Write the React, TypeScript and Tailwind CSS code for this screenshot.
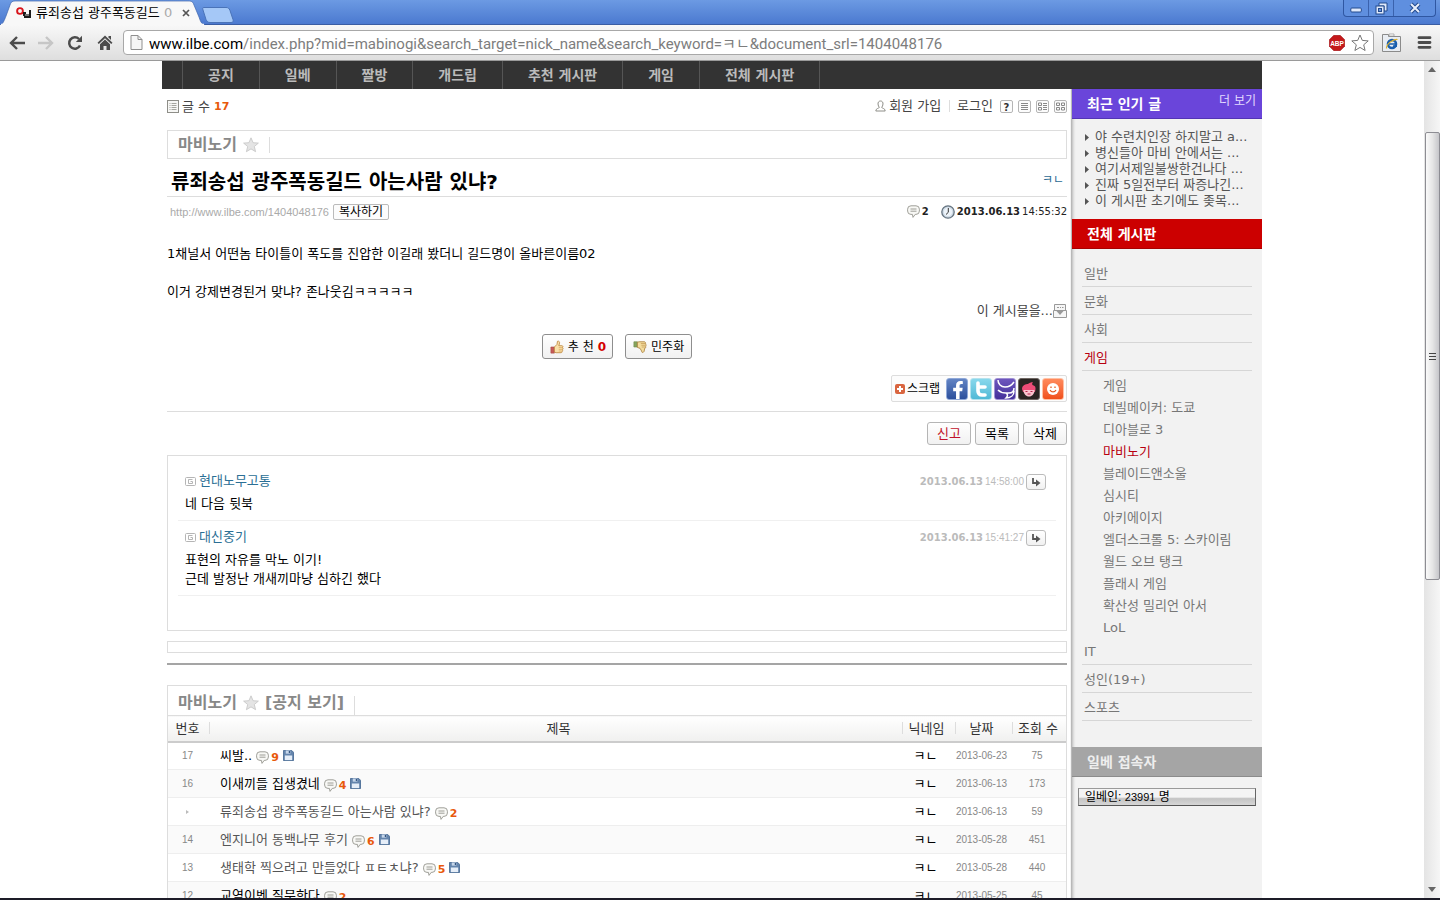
import React from "react";
import { FaFacebookF } from "react-icons/fa";

const SANS = "font-['DejaVu_Sans','Noto_Sans_CJK_KR',sans-serif]";
const NARROW = "font-['Liberation_Sans','Noto_Sans_CJK_KR',sans-serif]";

const menu = ["공지", "일베", "짤방", "개드립", "추천 게시판", "게임", "전체 게시판"];

const popular = [
  "야 수련치인장 하지말고 a...",
  "병신들아 마비 안에서는 ...",
  "여기서제일불쌍한건나다 ...",
  "진짜 5일전부터 짜증나긴...",
  "이 게시판 초기에도 좆목...",
];

const gameBoards = [
  "게임",
  "데빌메이커: 도쿄",
  "디아블로 3",
  "마비노기",
  "블레이드앤소울",
  "심시티",
  "아키에이지",
  "엘더스크롤 5: 스카이림",
  "월드 오브 탱크",
  "플래시 게임",
  "확산성 밀리언 아서",
  "LoL",
];

const rows = [
  { no: "17", title: "씨발..", count: 9, saved: true, date: "2013-06-23", views: 75, unread: true },
  { no: "16", title: "이새끼들 집생겼네", count: 4, saved: true, date: "2013-06-13", views: 173, unread: true },
  { no: "", title: "류죄송섭 광주폭동길드 아는사람 있냐?", count: 2, saved: false, date: "2013-06-13", views: 59, unread: false },
  { no: "14", title: "엔지니어 동백나무 후기", count: 6, saved: true, date: "2013-05-28", views: 451, unread: false },
  { no: "13", title: "생태학 찍으려고 만들었다 ㅍㅌㅊ냐?", count: 5, saved: true, date: "2013-05-28", views: 440, unread: false },
  { no: "12", title: "교역이벤 질문한다", count: 2, saved: false, date: "2013-05-25", views: 45, unread: true },
];

const comments = [
  { name: "현대노무고통", time: "14:58:00", lines: ["네 다음 뒷북"] },
  { name: "대신중기", time: "15:41:27", lines: ["표현의 자유를 막노 이기!", "근데 발정난 개새끼마냥 심하긴 했다"] },
];

function Bubble() {
  return (
    <svg viewBox="0 0 13 13" className="size-[13px] shrink-0" fill="none">
      <path d="M4 .8h5a3.4 3.4 0 0 1 3.4 3.4v1.8A3.4 3.4 0 0 1 9 9.400h-.8L6 12.400 5.400 9.400H4A3.400 3.400 0 0 1 .6 6V4.200A3.400 3.400 0 0 1 4 .8Z" fill="#f8f8f5" stroke="#96968f" strokeWidth=".9" />
      <path d="M3.500 4h6M3.500 6.200h6" stroke="#85857d" strokeWidth=".8" />
    </svg>
  );
}

function Floppy() {
  return (
    <svg viewBox="0 0 12 12" className="size-[11px] shrink-0">
      <path d="M.5.5h9l2 2v9H.5Z" fill="#6485ad" stroke="#4c6d96" />
      <path d="M3 .5h5v3.500H3Z" fill="#c6d6ea" />
      <path d="M6.300 1h1.400v2.400H6.300Z" fill="#34557f" />
      <path d="M2 6h8v5H2Z" fill="#e6eef8" />
    </svg>
  );
}

function Star() {
  return (
    <svg viewBox="0 0 16 16" className="size-4 shrink-0">
      <path d="M8 .8l2.100 4.900 5.300.4-4.100 3.400 1.300 5.200L8 11.900l-4.600 2.800 1.300-5.200L.6 6.100l5.300-.4Z" fill="#e4e4e4" stroke="#c4c4c4" strokeWidth=".8" />
    </svg>
  );
}

function TitleBar() {
  return (
    <div className="flex h-[25px] items-start justify-between bg-linear-to-b from-[#6c9ae3] to-[#4a78cf] shadow-[inset_0_-1px_0_#3a5da3]">
      <div className="flex">
        <div className="relative flex h-[25px] w-[205px] items-center gap-1 pl-4">
          <svg viewBox="0 0 205 25" preserveAspectRatio="none" className="absolute inset-0 size-full">
            <path d="M0 25c3-1 4-4 6-9l4-11c1-3 2-4 5-4h173c4 0 5 1 6 4l5 12c2 6 3 7 6 8Z" fill="#f8f8f8" stroke="#3f66ad" strokeWidth=".7" />
            <path d="M1 24.500h203" stroke="#f8f8f8" strokeWidth="1.500" />
          </svg>
          <svg viewBox="0 0 16 12" className="relative h-3 w-4 shrink-0">
            <circle cx="4" cy="4" r="2.900" fill="none" stroke="#d8151c" strokeWidth="1.900" />
            <path d="M7 5h3v2h3V3h2v8H8V9H7Z" fill="#1c1c1c" />
            <path d="M9 8h4" stroke="#fff" strokeWidth=".8" />
          </svg>
          <span className="relative w-[138px] overflow-hidden text-[13px] leading-5 whitespace-nowrap text-black">
            류죄송섭 광주폭동길드 <span className="text-[#aaa]">0</span>
          </span>
          <button type="button" aria-label="탭 닫기" className="relative flex size-4 items-center justify-center">
            <svg viewBox="0 0 8 8" className="size-2"><path d="M1 1l6 6M7 1L1 7" stroke="#555" strokeWidth="1.700" /></svg>
          </button>
        </div>
        <button type="button" aria-label="새 탭" className="mt-[5px] -ml-1">
          <svg viewBox="0 0 33 16" className="h-4 w-[33px]">
            <path d="M3 .5h22c2 0 3 .5 4 3l3 9c.6 2 0 3-2 3H9c-2 0-3-1-4-3L2 3C1.400 1.300 1.500.5 3 .5Z" fill="#a5c8f7" stroke="#4a73b8" />
          </svg>
        </button>
      </div>
      <div className="mr-1 flex h-[17px] divide-x divide-[#3a62ad] rounded-b border border-t-0 border-[#2f57a2] bg-[#5f8fdf]">
        <button type="button" aria-label="최소화" className="flex w-[25px] items-center justify-center">
          <svg viewBox="0 0 12 12" className="size-3"><rect x=".8" y="6" width="10.500" height="4" rx="1" fill="#dfe9fb" stroke="#234a8e" /></svg>
        </button>
        <button type="button" aria-label="이전 크기로" className="flex w-[25px] items-center justify-center">
          <svg viewBox="0 0 13 13" className="size-[13px]" fill="none">
            <path d="M4 1h8v8h-3V4H4Z" fill="#dfe9fb" stroke="#234a8e" />
            <rect x="1" y="4" width="8" height="8" fill="#dfe9fb" stroke="#234a8e" />
            <rect x="3.500" y="6.500" width="3" height="3" fill="#6b97e0" stroke="#234a8e" />
          </svg>
        </button>
        <button type="button" aria-label="닫기" className="flex w-[41px] items-center justify-center">
          <svg viewBox="0 0 12 12" className="size-3">
            <path d="M2 2l8 8M10 2l-8 8" stroke="#234a8e" strokeWidth="4" />
            <path d="M2 2l8 8M10 2l-8 8" stroke="#e8effc" strokeWidth="2" />
          </svg>
        </button>
      </div>
    </div>
  );
}

function Toolbar() {
  return (
    <div className="flex h-9 items-center border-b border-[#9a9a9a] bg-linear-to-b from-[#f8f8f8] to-[#dedede] pr-1.5 pl-2">
      <button type="button" aria-label="뒤로" className="flex w-[29px] pl-px">
        <svg viewBox="0 0 16 14" className="h-[14px] w-4" fill="none" stroke="#4c4c4c" strokeWidth="2.400"><path d="M8 1L2 7l6 6M2 7h14" /></svg>
      </button>
      <button type="button" aria-label="앞으로" className="flex w-[30px] pl-px">
        <svg viewBox="0 0 16 14" className="h-[14px] w-4" fill="none" stroke="#c6c6c6" strokeWidth="2.400"><path d="M8 1l6 6-6 6M14 7H0" /></svg>
      </button>
      <button type="button" aria-label="새로고침" className="flex w-[30px]">
        <svg viewBox="0 0 16 16" className="size-4">
          <path d="M13 10.500A5.700 5.700 0 1 1 12 4" fill="none" stroke="#4c4c4c" strokeWidth="2.500" />
          <path d="M15 .8V7H8.800Z" fill="#4c4c4c" />
        </svg>
      </button>
      <button type="button" aria-label="홈" className="flex w-[26px]">
        <svg viewBox="0 0 16 15" className="h-[15px] w-4" fill="#4c4c4c">
          <path d="M8 .5l7.500 7.200-1.300 1.300L8 3.200 1.800 9 .5 7.700Z" />
          <path d="M11.500 1H14v4l-2.500-2.500Z" />
          <path d="M8 4.500l5 4.700V15H9.500v-4h-3v4H3V9.200Z" />
        </svg>
      </button>
      <div className="flex h-[25px] min-w-0 flex-1 items-center gap-1.5 rounded-sm border border-[#a8a8a8] bg-white pr-1 pl-1.5">
        <svg viewBox="0 0 13 15" className="h-[15px] w-[13px] shrink-0">
          <path d="M1 .5h7l4 4v10H1Z" fill="#f6f6f6" stroke="#8f8f8f" />
          <path d="M8 .5v4h4" fill="none" stroke="#8f8f8f" />
        </svg>
        <div role="textbox" tabIndex={0} aria-label="주소" className="min-w-0 flex-1 overflow-hidden pt-[3px] font-[Roboto,'Noto_Sans_CJK_KR',sans-serif] text-[15px] leading-5 whitespace-nowrap text-[#7d7d7d]">
          <span className="text-black">www.ilbe.com</span>/index.php?mid=mabinogi&amp;search_target=nick_name&amp;search_keyword=ㅋㄴ&amp;document_srl=1404048176
        </div>
        <button type="button" aria-label="ABP" className="flex">
          <svg viewBox="0 0 16 16" className="size-4">
            <path d="M4.800.3h6.400l4.500 4.500v6.400l-4.500 4.500H4.800L.3 11.200V4.800Z" fill="#c4191b" stroke="#9b1214" strokeWidth=".6" />
            <text x="8" y="10.600" textAnchor="middle" fontSize="6.500" fontWeight="bold" fill="#fff" fontFamily="Liberation Sans">ABP</text>
          </svg>
        </button>
        <button type="button" aria-label="북마크" className="flex">
          <svg viewBox="0 0 18 18" className="size-[18px]">
            <path d="M9 1l2.300 5.400 5.900.5-4.500 3.900 1.400 5.700L9 13.400l-5.100 3.100 1.400-5.700L.8 6.900l5.900-.5Z" fill="#fff" stroke="#777" strokeLinejoin="round" />
          </svg>
        </button>
      </div>
      <button type="button" aria-label="IE 탭" className="ml-2 flex">
        <svg viewBox="0 0 19 19" className="size-[19px]">
          <path d="M.5 1.500h6v2h12v15H.5Z" fill="#e9edf2" stroke="#8b8b8b" />
          <path d="M7 1h5v2H7Z" fill="#fff" stroke="#999" strokeWidth=".7" />
          <circle cx="10" cy="11" r="4" fill="none" stroke="#1a5fae" strokeWidth="2.600" />
          <path d="M6.500 11h7.500M11 13.200h4" stroke="#1a5fae" strokeWidth="1.700" />
          <path d="M4.500 15.500C4 11 11 6 15.500 6.500" fill="none" stroke="#e0b22c" strokeWidth="1.200" />
        </svg>
      </button>
      <button type="button" aria-label="메뉴" className="mr-0.5 ml-4 flex">
        <svg viewBox="0 0 15 13" className="h-[13px] w-[15px]" stroke="#4c4c4c" strokeWidth="2.800" strokeLinecap="round"><path d="M2 1.700h11M2 6.500h11M2 11.300h11" /></svg>
      </button>
    </div>
  );
}

function ScrollBar() {
  return (
    <div className="flex w-4 shrink-0 flex-col items-center bg-linear-to-r from-[#e4e4e4] to-[#f6f6f6]">
      <svg viewBox="0 0 8 5" className="mt-1.5 mb-[60px] h-[5px] w-2 shrink-0"><path d="M0 5l4-5 4 5Z" fill="#666" /></svg>
      <div className="flex h-[448px] w-[15px] shrink-0 items-center justify-center rounded-xs border border-[#8d8d93] bg-linear-to-r from-[#fafafa] via-[#e6e6e6] to-[#c6c6ca]">
        <svg viewBox="0 0 7 9" className="h-[9px] w-[7px]" stroke="#444"><path d="M0 1.500h7M0 4.500h7M0 7.500h7" /></svg>
      </div>
      <div className="flex-1" />
      <svg viewBox="0 0 8 5" className="mb-1.5 h-[5px] w-2"><path d="M0 0h8L4 5Z" fill="#666" /></svg>
    </div>
  );
}

function ViewIcon({ kind }: { kind: "help" | "list" | "mixed" | "grid" }) {
  return (
    <svg viewBox="0 0 13 13" className="size-[13px]" fill="none" stroke="#888">
      <rect x=".5" y=".5" width="12" height="12" rx="1.500" fill="#fcfcfc" stroke="#b5b5b5" />
      {kind === "help" && <text x="6.500" y="10.500" textAnchor="middle" fontSize="10" fontWeight="bold" fill="#333" stroke="none" fontFamily="DejaVu Sans">?</text>}
      {kind === "list" && <path d="M3 3.500h7M3 5.500h7M3 7.500h7M3 9.500h7" />}
      {kind === "mixed" && <path d="M2.500 3h3v2.500h-3ZM2.500 7.500h3V10h-3ZM7 3.500h4M7 5.500h4M7 7.500h4M7 9.500h4" />}
      {kind === "grid" && <path d="M2.500 3h3v2.500h-3ZM7.500 3h3v2.500h-3ZM2.500 7.500h3V10h-3ZM7.500 7.500h3V10h-3Z" />}
    </svg>
  );
}

const button = "rounded-[3px] border bg-linear-to-b from-white to-[#f1f1f1] text-black";

function Article() {
  return (
    <article>
      <div className="flex h-[41px] items-start justify-between pt-2 text-[13px] leading-[18px] text-[#444]">
        <div className="flex items-center gap-[3px]">
          <svg viewBox="0 0 12 13" className="h-[13px] w-3" fill="none">
            <rect x=".5" y=".5" width="11" height="12" fill="#f7f7f5" stroke="#8e8e88" />
            <path d="M2.500 3.500h1M2.500 5.500h1M2.500 7.500h1M2.500 9.500h1M4.500 3.500h5M4.500 5.500h5M4.500 7.500h5M4.500 9.500h5" stroke="#a5a59f" />
          </svg>
          <span>글 수</span>
          <strong className="ml-px pt-px text-[11px] text-[#e8590c]">17</strong>
        </div>
        <div className="flex items-center gap-[5px]">
          <a href="#join" className="flex items-center gap-[3px]">
            <svg viewBox="0 0 11 12" className="h-3 w-[11px]" fill="none" stroke="#8e8e88">
              <path d="M5.500 1C3.500 1 3 2.500 3 4s.8 2.700 1.300 3.300C4.300 8.500.8 8 .8 11h9.400c0-3-3.500-2.500-3.500-3.700C7.200 6.700 8 5.500 8 4S7.500 1 5.500 1Z" />
            </svg>
            회원 가입
          </a>
          <span className="ml-[3px] h-3 w-px bg-[#ddd]" />
          <a href="#login" className="mx-[2px]">로그인</a>
          <ViewIcon kind="help" />
          <ViewIcon kind="list" />
          <ViewIcon kind="mixed" />
          <ViewIcon kind="grid" />
        </div>
      </div>

      <h2 className="flex h-[29px] items-center gap-1.5 border border-[#ddd] pl-[10px] text-[16px] font-bold text-[#888]">
        <a href="#board">마비노기</a>
        <Star />
        <span className="ml-1 h-4 w-px bg-[#ddd]" />
      </h2>

      <div className="flex h-[38px] items-center justify-between border-b border-[#ddd] pt-2 pr-[3px] pl-1">
        <h1 className="text-[20px] leading-[26px] font-bold text-black">류죄송섭 광주폭동길드 아는사람 있냐?</h1>
        <a href="#author" className="mb-1 text-[12px] leading-5 text-[#2b6a94]">ㅋㄴ</a>
      </div>

      <div className="flex h-[29px] items-center justify-between pl-[3px] text-[10px] leading-4 text-[#222]">
        <div className="flex items-center gap-1">
          <a href="#link" className={`${NARROW} text-[11px] text-[#aaa]`}>http://www.ilbe.com/1404048176</a>
          <button type="button" className="h-4 rounded-xs border border-[#bbb] bg-[#fcfcfc] px-[5px] text-[12px] leading-[14px] text-black">복사하기</button>
        </div>
        <div className="flex items-center">
          <Bubble />
          <strong className="ml-0.5">2</strong>
          <svg viewBox="0 0 14 14" className="mr-0.5 ml-3 size-[14px]">
            <circle cx="7" cy="7" r="6.200" fill="#cfdbe6" stroke="#65737f" strokeWidth="1.300" />
            <circle cx="7" cy="7" r="4.200" fill="#edf3f9" />
            <path d="M7.300 3v4.300L5 9.500" fill="none" stroke="#333" />
          </svg>
          <strong className="mr-[2px]">2013.06.13</strong>14:55:32
        </div>
      </div>

      <div className="pt-[18px] text-[13px] leading-[19px] text-black">
        <p>1채널서 어떤놈 타이틀이 폭도를 진압한 이길래 봤더니 길드명이 올바른이름02</p>
        <p>&nbsp;</p>
        <p>이거 강제변경된거 맞냐? 존나웃김ㅋㅋㅋㅋㅋ</p>
      </div>
      <div className="flex items-center justify-end text-[13px] leading-[19px] text-[#444]">
        <a href="#actions" className="flex items-center">
          이 게시물을...
          <svg viewBox="0 0 14 14" className="size-[14px]" fill="none" stroke="#999">
            <path d="M1.500 6V.5h11V6M.5 6.500h13v7H.5Z" fill="#f6f6f6" />
            <path d="M4 3.500h2M7 3.500h1M9 3.500h1.500" />
            <path d="M3 6.500h8L7 11Z" fill="#999" stroke="none" />
          </svg>
        </a>
      </div>

      <div className="mt-3.5 flex justify-center gap-3 text-[12px]">
        <button type="button" className={`${button} flex h-[25px] items-center gap-1 border-[#8e8e8e] pr-1.5 pl-[7px]`}>
          <svg viewBox="0 0 16 16" className="size-[14px]">
            <path d="M1 8h4v7H1Z" fill="#c65a58" stroke="#a84a47" strokeWidth=".7" />
            <path d="M5 8l3-3 .5-3.500c1.800-.8 3 .8 2.200 3L10 6.500h3.600c1.200 0 1.600 1.500.7 2.100.9.5.8 1.700 0 2.100.6.700.4 1.600-.5 1.900.4.900-.1 1.900-1.200 1.900H7L5 13.800Z" fill="#fae0a8" stroke="#b98034" strokeWidth=".9" />
            <path d="M10 8.700h4M10 10.700h4M10 12.600h3.500" stroke="#cf9a4e" strokeWidth=".7" />
          </svg>
          추 천 <strong className="text-[#d40000]">0</strong>
        </button>
        <button type="button" className={`${button} flex h-[25px] items-center gap-1 border-[#8e8e8e] px-[7px]`}>
          <svg viewBox="0 0 16 16" className="size-[14px]">
            <path d="M1 2h4v6H1Z" fill="#86a45c" stroke="#708c4b" strokeWidth=".7" />
            <path d="M5 2.500L7 2h6c1 0 1.500 1 1 1.800.9.300 1 1.300.4 1.900.8.600.7 1.700-.1 2.100.4.900 0 1.800-1 1.900l-.6 3.300c-1 1.800-3 1.700-2.800-.3L8 9.500 5 8.500Z" fill="#f3dc9d" stroke="#a77a35" strokeWidth=".9" />
            <path d="M9 4h5M9.500 6h4.500M10 8h4" stroke="#bd8e48" strokeWidth=".7" />
          </svg>
          민주화
        </button>
      </div>

      <div className="flex justify-end border-b border-[#ddd] pt-4 pb-[9px]">
        <div className="flex h-[27px] items-center gap-0.5 rounded-xs border border-[#ddd] bg-[#fcfcfc] px-0.5">
          <svg viewBox="0 0 10 10" className="ml-px size-[10px]"><rect width="10" height="10" rx="2" fill="#d9653f" /><path d="M5 2v6M2 5h6" stroke="#fff" strokeWidth="2" /></svg>
          <span className="mr-1 text-[12px] leading-5 text-black">스크랩</span>
          <a href="#facebook" aria-label="Facebook" className="flex size-[22px] items-end justify-end rounded-[3px] border border-[#8fa8d8] bg-linear-to-b from-[#6384c4] to-[#2c4f9c] text-white">
            <FaFacebookF className="size-[18px]" />
          </a>
          <a href="#twitter" aria-label="Twitter" className="flex size-[22px] items-center justify-center rounded-[3px] border border-[#b4e2ee] bg-linear-to-b from-[#88d8ec] to-[#4fb9d6]">
            <svg viewBox="0 0 16 16" className="size-4" fill="none" stroke="#fff" strokeWidth="3.600" strokeLinecap="round" strokeLinejoin="round"><path d="M5 2v8c0 2.500 1.500 4 4 4h3M5 6h7" /></svg>
          </a>
          <a href="#yozm" aria-label="요즘" className="flex size-[22px] items-center justify-center rounded-[3px] border border-[#9f90d4] bg-linear-to-b from-[#6e56bd] to-[#45309a]">
            <svg viewBox="0 0 20 20" className="size-5" fill="none" stroke="#fff" strokeWidth="1.500"><path d="M3 1c0 4 3 7 7 7s7-2 9-5M3 11c2 2 5 3 8 3M19 9c0 3-2 5-5 5h-3c2 1 2 3 0 5 5 0 8-3 8-7" /></svg>
          </a>
          <a href="#me2day" aria-label="미투데이" className="flex size-[22px] items-center justify-center rounded-[3px] border border-[#6e6662] bg-[#2a2422]">
            <svg viewBox="0 0 18 18" className="size-[18px]">
              <path d="M2 9c0-4 4-5 6-5 1-1 3-2 5-2-1 1-1 2-.5 3C16 6 16 8 15 12H3Z" fill="#ee4c77" />
              <path d="M3.500 10h11c0 4-2.500 6.500-5.500 6.500S3.500 14 3.500 10Z" fill="#fbc3cf" />
              <path d="M5.500 11.500h2M10.500 11.500h2M7.500 14h3" stroke="#b42148" strokeWidth="1.200" />
            </svg>
          </a>
          <a href="#clog" aria-label="C로그" className="flex size-[22px] items-center justify-center rounded-[3px] border border-[#ffc0a4] bg-linear-to-b from-[#ff8a5c] to-[#f04f18]">
            <svg viewBox="0 0 18 18" className="size-[18px]">
              <circle cx="9" cy="9" r="6" fill="#fff" />
              <path d="M7 6.500v1.500M11 6.500v1.500M6 10c1.500 2.500 4.500 2.500 6 0" fill="none" stroke="#e55a22" strokeWidth="1.300" />
            </svg>
          </a>
        </div>
      </div>

      <div className="flex justify-end gap-1 pt-[10px] pb-[10px] text-[13px]">
        <button type="button" className="h-[23px] w-11 rounded-[3px] border border-[#b5b5b5] bg-linear-to-b from-white to-[#f1f1f1] text-[#c1122b]">신고</button>
        <button type="button" className={`${button} h-[23px] w-11 border-[#b5b5b5]`}>목록</button>
        <button type="button" className={`${button} h-[23px] w-11 border-[#b5b5b5]`}>삭제</button>
      </div>
    </article>
  );
}

function Comments() {
  return (
    <section aria-label="댓글" className="border border-[#ddd] px-[10px] pt-2 pb-[34px]">
      {comments.map((c, i) => (
        <div key={c.name} className={`border-b border-[#f0f0f0] pt-1.5 pr-[10px] pb-[7px] pl-[7px] ${i === 0 ? "mt-px" : ""}`}>
          <div className="flex h-[23px] items-start justify-between">
            <a href="#user" className="flex items-center gap-[3px] text-[13px] leading-5 text-[#2b6f95]">
              <svg viewBox="0 0 11 9" className="h-[9px] w-[11px]" fill="none" stroke="#b5b5b5">
                <rect x=".5" y=".5" width="10" height="8" rx="1" />
                <path d="M7.500 2.500h-4v4h4v-2h-2" />
              </svg>
              {c.name}
            </a>
            <div className="flex items-center gap-[2px] pt-[3px] text-[10px] leading-4 text-[#bbb]">
              <strong>2013.06.13</strong>
              <span className={NARROW}>{c.time}</span>
              <button type="button" aria-label="답글" className={`${button} flex h-4 w-5 items-center justify-center border-[#bbb]`}>
                <svg viewBox="0 0 10 9" className="h-[9px] w-[10px]"><path d="M2 0v5h4" fill="none" stroke="#555" strokeWidth="1.800" /><path d="M5 1.500L9.500 5 5 8.500Z" fill="#555" /></svg>
              </button>
            </div>
          </div>
          <div className="text-[13px] leading-[19px] text-black">
            {c.lines.map((l) => (
              <p key={l}>{l}</p>
            ))}
          </div>
        </div>
      ))}
    </section>
  );
}

function BoardList() {
  const th = "relative h-[26px] bg-linear-to-b from-white to-[#f0f0ef] p-0 font-normal";
  const bar = "after:absolute after:top-1.5 after:left-0 after:h-3 after:w-px after:bg-[#ddd]";
  return (
    <section className="border border-b-0 border-[#ddd]">
      <h2 className="flex h-[29px] items-center gap-1.5 pt-1 pl-[10px] text-[16px] font-bold text-[#888]">
        <a href="#board">마비노기</a>
        <Star />
        <a href="#notice">[공지 보기]</a>
        <span className="mt-1.5 ml-1 h-5 w-px bg-[#ddd]" />
      </h2>
      <table className="w-full table-fixed border-collapse border-t border-[#ddd] text-center text-[13px] text-[#333]">
        <colgroup>
          <col className="w-[41px]" />
          <col />
          <col className="w-[53px]" />
          <col className="w-[57px]" />
          <col className="w-[54px]" />
        </colgroup>
        <thead className="border-b-2 border-[#ccc]">
          <tr>
            <th scope="col" className={`${th} pr-0.5`}>번호</th>
            <th scope="col" className={`${th} ${bar} pl-1.5`}>제목</th>
            <th scope="col" className={`${th} ${bar} pr-1`}>닉네임</th>
            <th scope="col" className={`${th} ${bar} pr-1`}>날짜</th>
            <th scope="col" className={`${th} ${bar} pr-0.5`}>조회 수</th>
          </tr>
        </thead>
        <tbody>
          {rows.map((r) => (
            <tr key={r.date + r.views} className="h-7 border-b border-[#eee] even:bg-[#fafafa]">
              <td className={`${NARROW} p-0 pr-0.5 text-[10px] text-[#888]`}>
                {r.no || <svg viewBox="0 0 3 4" className="mx-auto h-1 w-[3px]"><path d="M0 0l3 2-3 2Z" fill="#bbb" /></svg>}
              </td>
              <td className="p-0 pl-[11px] text-left">
                <div className="flex items-center">
                  <a href="#post" className={r.unread ? "text-black" : "text-[#555]"}>{r.title}</a>
                  <span className="mt-1 mr-0.5 ml-1 flex"><Bubble /></span>
                  <strong className="mt-1 text-[11px] leading-4 text-[#e8590c]">{r.count}</strong>
                  {r.saved && <span className="ml-1"><Floppy /></span>}
                </div>
              </td>
              <td className="p-0 pr-1.5 text-[13px] text-black">ㅋㄴ</td>
              <td className={`${NARROW} p-0 pr-1 text-[10px] text-[#888]`}>{r.date}</td>
              <td className={`${NARROW} p-0 pr-1 text-[10px] text-[#888]`}>{r.views}</td>
            </tr>
          ))}
        </tbody>
      </table>
    </section>
  );
}

function BoardLink({ children, active = false }: { children: string; active?: boolean }) {
  return (
    <a href="#board" className={`flex h-7 items-center border-b border-[#d6d6d6] pt-[3px] pl-[2px] ${active ? "text-[#b8000f]" : "text-[#777]"}`}>
      {children}
    </a>
  );
}

function Sidebar() {
  return (
    <aside className="w-[190px] shrink-0 bg-[#f2f2f2] text-[13px] shadow-[-1px_0_1px_rgba(0,0,0,0.28),inset_3px_0_3px_-2px_rgba(0,0,0,0.25)]">
      <div className="flex h-[30px] justify-between border-b border-[#5334b4] bg-[#6a45da] pr-[6px] pl-[15px] text-white">
        <h3 className="text-[14px] leading-[30px] font-bold">최근 인기 글</h3>
        <a href="#more" className="text-[12px] leading-6 text-[#e4dcff]">더 보기</a>
      </div>
      <ul className="flex flex-col pt-[10px] pb-[10px] pl-[13px] text-[#555]">
        {popular.map((p) => (
          <li key={p} className="flex h-4 items-center gap-[6px]">
            <svg viewBox="0 0 4 7" className="h-[7px] w-1 shrink-0"><path d="M0 0l4 3.500L0 7Z" fill="#555" /></svg>
            <a href="#post" className="whitespace-nowrap">{p}</a>
          </li>
        ))}
      </ul>
      <h3 className="h-[30px] border-b border-[#a80000] bg-[#cc0000] pl-[15px] text-[14px] leading-[30px] font-bold text-white">전체 게시판</h3>
      <nav className="pt-[10px] pr-[10px] pb-[26px] pl-[10px]" aria-label="게시판">
        <BoardLink>일반</BoardLink>
        <BoardLink>문화</BoardLink>
        <BoardLink>사회</BoardLink>
        <BoardLink active>게임</BoardLink>
        <ul className="pt-1 pl-[21px]">
          {gameBoards.map((g) => (
            <li key={g} className={g === "마비노기" ? "leading-[22px] text-[#b8000f]" : "leading-[22px] text-[#777]"}>
              <a href="#board">{g}</a>
            </li>
          ))}
        </ul>
        <div className="-mt-0.5">
          <BoardLink>IT</BoardLink>
          <BoardLink>성인(19+)</BoardLink>
          <BoardLink>스포츠</BoardLink>
        </div>
      </nav>
      <h3 className="h-[30px] border-b border-[#8b8b8b] bg-[#a5a5a5] pl-[15px] text-[14px] leading-[30px] font-bold text-[#eee]">일베 접속자</h3>
      <div className="mx-1.5 mt-[11px] h-[18px] border border-t-[#999] border-r-[#666] border-b-[#555] border-l-[#888] bg-linear-to-b from-[#f4f4f4] from-50% via-[#c4c4c4] via-60% to-[#d6d6d6] pl-1.5 font-['Liberation_Sans','Noto_Sans_CJK_KR',sans-serif] text-[12px] leading-4 text-black">
        일베인: <span className="text-[11px]">23991</span> 명
      </div>
    </aside>
  );
}

export default function App() {
  return (
    <div className={`${SANS} flex h-screen flex-col overflow-hidden border-b-2 border-[#1d1c28] bg-white`}>
      <TitleBar />
      <Toolbar />
      <div className="flex min-h-0 flex-1">
        <div className="min-w-0 flex-1 overflow-hidden">
          <div className="mx-auto flex min-h-full max-w-[1100px] flex-col">
            <nav className="flex h-7 shrink-0 bg-[#333] pl-5 text-[14px] leading-7 font-bold text-[#bbb]" aria-label="주 메뉴">
              {menu.map((m) => (
                <a key={m} href="#menu" className="border-l border-[#555] px-[25px] last:border-r">{m}</a>
              ))}
            </nav>
            <div className="flex flex-1">
              <main className="mr-[5px] ml-[5px] min-w-0 flex-1">
                <Article />
                <Comments />
                <div className="mt-[10px] mb-[10px] h-3 border border-[#ddd]" />
                <div className="mb-5 h-0.5 bg-[#a5a5a5]" />
                <BoardList />
              </main>
              <Sidebar />
            </div>
          </div>
        </div>
        <ScrollBar />
      </div>
    </div>
  );
}
